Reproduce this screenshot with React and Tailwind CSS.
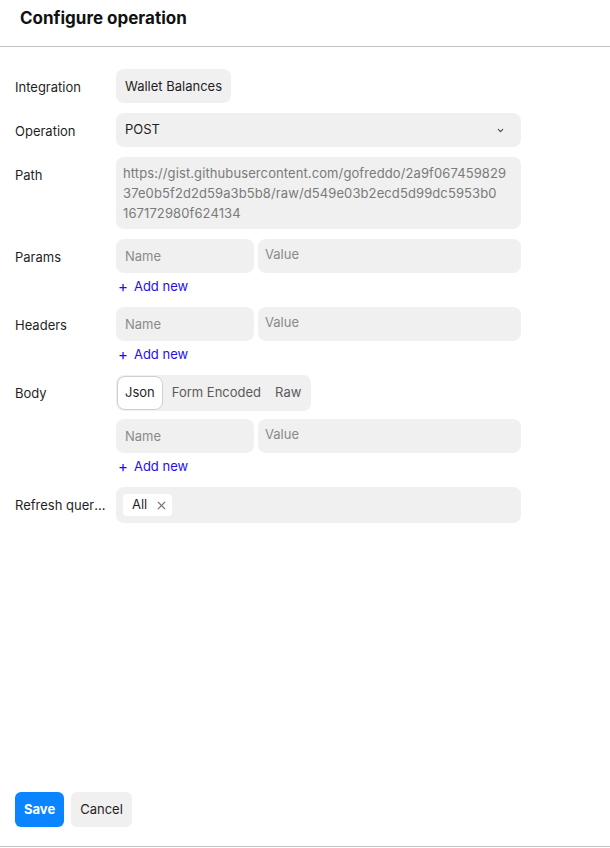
import { FiChevronDown, FiX } from 'react-icons/fi';

const Label = ({ children }) => (
  <div className="w-[116px] shrink-0 pl-[15px] pr-2 h-[34px] pt-[3px] flex items-center text-[13px] text-[#1f1f1f]">
    <span className="truncate">{children}</span>
  </div>
);

const AddNew = () => (
  <button className="flex items-center h-5 mt-1 pl-0.5 text-[13px] text-[#1f0ef2]">
    <span className="text-[15px] leading-none mr-[6px] -mt-0.5">+</span>
    Add new
  </button>
);

const KeyValue = () => (
  <div className="flex gap-1">
    <div className="w-[138px] h-[34px] rounded-lg bg-[#f0f0f0] px-[9px] pt-[2px] flex items-center text-[13px] text-[#8a8a8a]">Name</div>
    <div className="flex-1 h-[34px] rounded-lg bg-[#f0f0f0] px-[7px] pt-[7px] text-[13px] text-[#8a8a8a] leading-[16px]">Value</div>
  </div>
);

const ConfigurarOperacion = () => {
  const path = 'https://gist.githubusercontent.com/gofreddo/2a9f067459829 37e0b5f2d2d59a3b5b8/raw/d549e03b2ecd5d99dc5953b0 167172980f624134';
  const lineas = path.split(' ');

  return (
    <div className="h-[848px] flex flex-col bg-white" style={{ fontFamily: 'Inter, "Noto Sans", sans-serif' }}>
      <div className="h-[47px] shrink-0 border-b border-[#c4c4c4] px-5 pt-[7px]">
        <h1 className="text-[17px] font-bold text-[#111] leading-[22px]">Configure operation</h1>
      </div>

      <div className="flex flex-col gap-[10px] pt-[22px] pr-[89px]">
        <div className="flex">
          <Label>Integration</Label>
          <div className="h-[34px] rounded-lg bg-[#f0f0f0] px-[9px] pt-[2px] flex items-center text-[13px] text-[#1f1f1f]">Wallet Balances</div>
        </div>

        <div className="flex">
          <Label>Operation</Label>
          <div className="flex-1 h-[34px] rounded-lg bg-[#f0f0f0] px-[9px] flex items-center justify-between text-[13px] text-[#1f1f1f]">
            <span>POST</span>
            <FiChevronDown size={9} className="mr-[7px] text-[#444]" strokeWidth={3} />
          </div>
        </div>

        <div className="flex">
          <Label>Path</Label>
          <div className="flex-1 rounded-lg bg-[#f0f0f0] px-[7px] py-[6px] text-[13px] leading-5 text-[#7a7a7a] tracking-[0.1px]">
            {lineas.map((l) => (
              <div key={l}>{l}</div>
            ))}
          </div>
        </div>

        <div className="flex">
          <Label>Params</Label>
          <div className="flex-1">
            <KeyValue />
            <AddNew />
          </div>
        </div>

        <div className="flex">
          <Label>Headers</Label>
          <div className="flex-1">
            <KeyValue />
            <AddNew />
          </div>
        </div>

        <div className="flex">
          <div className="w-[116px] shrink-0 pl-[15px] pr-2 h-9 pt-[1px] flex items-center text-[13px] text-[#1f1f1f]">Body</div>
          <div className="flex-1">
            <div className="inline-flex items-center h-9 rounded-lg bg-[#f0f0f0] p-px mb-2">
              <div className="h-[34px] px-[7px] flex items-center rounded-lg bg-white border border-[#cfcfcf] text-[13px] text-[#1f1f1f]">Json</div>
              <div className="h-[34px] px-[9px] flex items-center text-[13px] text-[#5a5a5a]">Form Encoded</div>
              <div className="h-[34px] pl-[5px] pr-[9px] flex items-center text-[13px] text-[#5a5a5a]">Raw</div>
            </div>
            <KeyValue />
            <AddNew />
          </div>
        </div>

        <div className="flex items-center">
          <div className="w-[116px] shrink-0 pl-[15px] pr-2 h-9 pt-[1px] flex items-center text-[13px] text-[#1f1f1f]">
            <span className="truncate">Refresh queries</span>
          </div>
          <div className="flex-1 h-9 rounded-lg bg-[#f0f0f0] px-[7px] flex items-center">
            <div className="h-[22px] rounded bg-white pl-[9px] pr-[4px] flex items-center gap-[8px] text-[13px] text-[#1f1f1f]">
              All
              <FiX size={13} className="text-[#777]" />
            </div>
          </div>
        </div>
      </div>

      <div className="flex-1" />

      <div className="flex gap-[7px] px-[15px] pb-[19px] border-b border-[#c4c4c4]">
        <button className="h-[35px] px-[9px] rounded-md bg-[#0a84ff] text-white text-[13px] font-bold">Save</button>
        <button className="h-[35px] px-[9px] rounded-md bg-[#f0f0f0] text-[#1f1f1f] text-[13px]">Cancel</button>
      </div>
      <div className="h-px" />
    </div>
  );
};

export default ConfigurarOperacion;
